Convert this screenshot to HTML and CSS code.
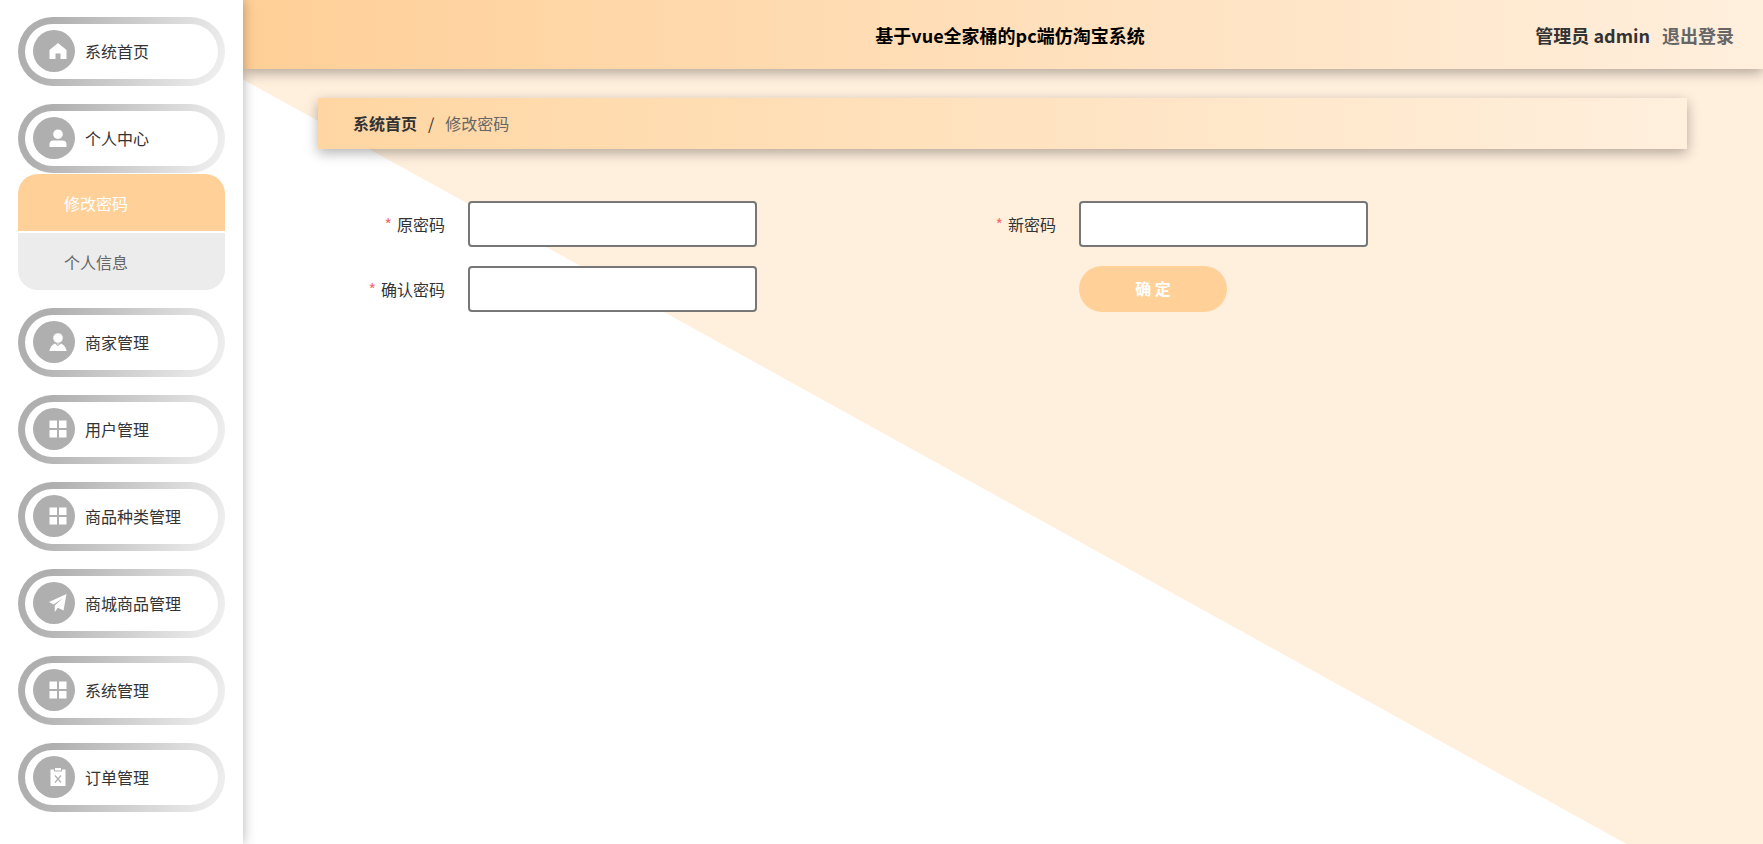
FILE: index.html
```html
<!DOCTYPE html>
<html lang="zh-CN">
<head>
<meta charset="utf-8">
<title>基于vue全家桶的pc端仿淘宝系统</title>
<link rel="stylesheet" href="styles.css">
</head>
<body>
<div class="app">
  <nav class="sidebar">
    <ul class="menu">
      <li><a class="item" href="#"><span class="badge"><svg class="icon" viewBox="0 0 18 18"><path d="M9 1 17.500 8V17H11.500V11.500H6.500V17H.5V8Z"/></svg></span>系统首页</a></li>
      <li>
        <a class="item" href="#"><span class="badge"><svg class="icon" viewBox="0 0 18 18"><circle cx="9" cy="5.200" r="4.800"/><path d="M.5 18V15.500q0-4 4-4h9q4 0 4 4V18Z"/></svg></span>个人中心</a>
        <ul class="submenu">
          <li><a class="subitem active" href="#">修改密码</a></li>
          <li><a class="subitem" href="#">个人信息</a></li>
        </ul>
      </li>
      <li><a class="item" href="#"><span class="badge"><svg class="icon" viewBox="0 0 18 18"><circle cx="9" cy="5" r="4.800"/><path d="M.3 18Q1.500 12.200 6 10.400L9 13.200l3-2.800q4.500 1.800 5.700 7.600Z"/><path d="M7.700 10.600h2.600L9 12Z"/></svg></span>商家管理</a></li>
      <li><a class="item" href="#"><span class="badge"><svg class="icon" viewBox="0 0 18 18"><path d="M.5.5H8V8H.5ZM10 .5h7.500V8H10ZM.5 10H8v7.500H.5ZM10 10h7.500v7.500H10Z"/></svg></span>用户管理</a></li>
      <li><a class="item" href="#"><span class="badge"><svg class="icon" viewBox="0 0 18 18"><path d="M.5.5H8V8H.5ZM10 .5h7.500V8H10ZM.5 10H8v7.500H.5ZM10 10h7.500v7.500H10Z"/></svg></span>商品种类管理</a></li>
      <li><a class="item" href="#"><span class="badge"><svg class="icon" viewBox="0 0 18 18"><path d="M17.500 0 0 8l4.500 2.600L14 4 5.800 11.500V18l3-4.200 5.700 2.700Z"/></svg></span>商城商品管理</a></li>
      <li><a class="item" href="#"><span class="badge"><svg class="icon" viewBox="0 0 18 18"><path d="M.5.5H8V8H.5ZM10 .5h7.500V8H10ZM.5 10H8v7.500H.5ZM10 10h7.500v7.500H10Z"/></svg></span>系统管理</a></li>
      <li><a class="item" href="#"><span class="badge"><svg class="icon" viewBox="0 0 18 18"><path d="M1.500 1.500H5v2h8v-2h3.500V18h-15Z"/><path d="M6 0h6v2.500H6Z"/><path class="cross" d="m6 7.500 6 7M12 7.500l-6 7"/></svg></span>订单管理</a></li>
    </ul>
  </nav>
  <div class="page">
    <header class="header">
      <h1 class="title">基于vue全家桶的pc端仿淘宝系统</h1>
      <div class="account"><span>管理员 admin</span><a class="logout" href="#">退出登录</a></div>
    </header>
    <main class="content">
      <nav class="crumbs"><a class="crumb" href="#">系统首页</a><span class="slash">/</span><span class="current">修改密码</span></nav>
      <form class="form">
        <div class="field"><label class="label" for="old">原密码</label><input class="input" id="old" type="password"></div>
        <div class="field"><label class="label" for="new">新密码</label><input class="input" id="new" type="password"></div>
        <div class="field"><label class="label" for="confirm">确认密码</label><input class="input" id="confirm" type="password"></div>
        <div class="field actions"><button class="submit" type="button">确 定</button></div>
      </form>
    </main>
  </div>
</div>
</body>
</html>
```
FILE: styles.css
```css
* { box-sizing: border-box; }
body {
  margin: 0;
  font: 16px/24px "Noto Sans CJK SC", sans-serif;
  color: #333;
}
a { color: inherit; text-decoration: none; }
ul { margin: 0; padding: 0; list-style: none; }

.app { display: flex; min-height: 100vh; }

.sidebar {
  flex: none;
  width: 243px;
  padding: 17px 18px;
  background: #fff;
  box-shadow: 0 0 12px rgba(0, 0, 0, .3);
  z-index: 2;
}
.menu { display: grid; gap: 18px; }
.item {
  display: flex;
  align-items: center;
  gap: 10px;
  height: 69px;
  padding: 0 8px 2px;
  border: 7px solid transparent;
  border-radius: 35px;
  background: linear-gradient(#fff, #fff) padding-box,
    linear-gradient(110deg, #afafaf 15%, #eee 95%) border-box;
}
.badge {
  display: grid;
  place-items: center;
  width: 42px;
  height: 42px;
  padding-left: 8px;
  border-radius: 50%;
  background: #afafaf;
}
.icon { width: 18px; height: 18px; fill: #fff; }
.cross { fill: none; stroke: #afafaf; stroke-width: 1.200; }

.submenu {
  display: grid;
  gap: 2px;
  margin-top: 1px;
  border-radius: 20px;
  overflow: hidden;
}
.subitem {
  display: block;
  padding: 17px 46px 16px;
  background: #ececec;
  color: #666;
}
.subitem.active { background: #ffd199; color: #fff; }

.page { flex: 1; display: flex; flex-direction: column; min-width: 0; }
.header {
  display: grid;
  grid-template-columns: 1fr auto 1fr;
  align-items: center;
  height: 69px;
  padding: 0 29px 0 43px;
  background: linear-gradient(90deg, #ffcf97, #ffefdd);
  box-shadow: 0 4px 12px rgba(0, 0, 0, .3);
  z-index: 1;
  font-size: 18px;
  font-weight: 700;
}
.title {
  grid-column: 2;
  margin: 0;
  font-size: inherit;
  color: #000;
}
.account { display: flex; justify-content: flex-end; gap: 12px; }
.logout { color: #666; }

.content {
  flex: 1;
  padding: 29px 76px 29px 75px;
  background: #ffefdd linear-gradient(to top right, #fff 50%, #ffefdd calc(50% + 1px)) 0 11px / 100% calc(100vh - 4px) no-repeat;
}
.crumbs {
  display: flex;
  gap: 11px;
  padding: 13px 35px 14px;
  background: linear-gradient(90deg, #ffd6a2, #ffefdd);
  box-shadow: 0 4px 12px rgba(0, 0, 0, .3);
}
.crumb { font-weight: 700; }
.current { color: #666; }

.form {
  display: grid;
  grid-template-columns: 611px 1fr;
  gap: 19px 0;
  margin-top: 52px;
}
.field { display: flex; align-items: center; }
.label { width: 127px; text-align: right; }
.label::before { content: "*"; margin-right: 5px; color: #f56c6c; }
.input {
  width: 289px;
  height: 46px;
  margin-left: 23px;
  padding: 0 12px;
  border: 2px solid #777;
  border-radius: 4px;
  background: #fff;
  font: inherit;
}
.actions { padding-left: 150px; }
.submit {
  width: 148px;
  height: 46px;
  padding: 0 0 2px;
  border: 0;
  border-radius: 23px;
  background: #ffd199;
  color: #fff;
  font: inherit;
  font-weight: 700;
}
```
